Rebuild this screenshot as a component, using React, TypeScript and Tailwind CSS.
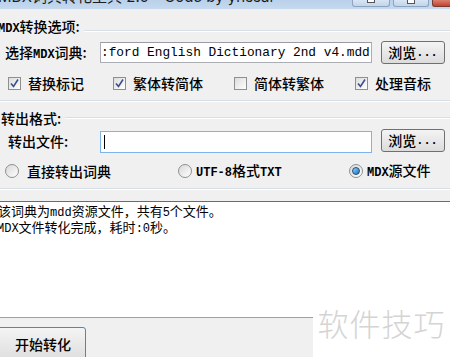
import React from "react";

const Latin = ({ children }: { children: React.ReactNode }) => (
  <span className="text-[12px] font-['Liberation_Mono',monospace] font-bold">{children}</span>
);

const CheckBox = ({ checked }: { checked: boolean }) => (
  <div className="w-[13px] h-[13px] border border-[#8e8f8f] bg-gradient-to-br from-[#dcdcdc] to-[#ffffff] flex items-center justify-center shrink-0">
    {checked && (
      <svg width="11" height="11" viewBox="0 0 11 11">
        <path d="M2 5.5 L4.5 8.5 L9 1.5" stroke="#3c4f8c" strokeWidth="1.6" fill="none" />
      </svg>
    )}
  </div>
);

const Radio = ({ checked }: { checked: boolean }) => (
  <div className="w-[14px] h-[14px] rounded-full border border-[#8e8f8f] bg-gradient-to-br from-[#d8d8d8] to-[#ffffff] flex items-center justify-center shrink-0">
    {checked && (
      <div className="w-[8px] h-[8px] rounded-full bg-gradient-to-br from-[#8fd3ff] to-[#1d6fb5] border border-[#1f4f7c]" />
    )}
  </div>
);

const Browse = () => (
  <div className="w-[64px] h-[23px] border border-[#707070] rounded-[3px] bg-gradient-to-b from-[#f4f4f4] to-[#dcdcdc] flex items-center justify-center text-[14px] font-medium text-black">
    浏览<Latin>...</Latin>
  </div>
);

const Sep = () => (
  <div className="h-[2px] flex flex-col">
    <div className="h-[1px] bg-[#d5dfe5]" />
    <div className="h-[1px] bg-white" />
  </div>
);

export default function App() {
  return (
    <div className="w-[450px] h-[357px] bg-[#f0f0f0] overflow-hidden relative flex flex-col font-['Noto_Sans_CJK_SC',sans-serif] text-black">
      {/* title bar */}
      <div className="h-[9px] shrink-0 bg-gradient-to-b from-[#b9d1ea] to-[#c6d9ee] flex overflow-hidden relative">
        <div className="ml-[-2px] -mt-[13px] text-[15px] leading-[20px] text-[#1e1e1e] whitespace-nowrap font-['Inter','Noto_Sans_CJK_SC',sans-serif]">
          MDX词典转化工具 2.0 - Code by ynssar
        </div>
        <div className="ml-auto flex gap-[3px] items-start">
          <div className="w-[38px] h-[7px] rounded-b-[3px] border border-t-0 border-[#8ea3bd] bg-gradient-to-b from-[#d8e5f3] to-[#c2d5ea] flex justify-center">
            <div className="w-[8px] h-[3px] bg-white border border-[#555] border-t-0" />
          </div>
          <div className="w-[36px] h-[7px] rounded-b-[3px] border border-t-0 border-[#8ea3bd] bg-gradient-to-b from-[#d8e5f3] to-[#c2d5ea] flex justify-center">
            <div className="w-[8px] h-[4px] bg-white border border-[#555] border-t-0" />
          </div>
          <div className="w-[18px] h-[7px] rounded-bl-[3px] border border-t-0 border-r-0 border-[#7b3a31] bg-gradient-to-b from-[#d8806f] to-[#c4402c]" />
        </div>
      </div>

      {/* group 1 header */}
      <div className="mt-[10px] h-[16px] flex items-center shrink-0">
        <div className="ml-[-2px] text-[14px] leading-[16px] whitespace-nowrap font-medium">
          <Latin>MDX</Latin>转换选项:
        </div>
        <div className="flex-1 ml-[4px] mt-[7px]"><Sep /></div>
      </div>

      {/* row 1 */}
      <div className="mt-[6px] h-[23px] flex items-center shrink-0">
        <div className="ml-[5px] w-[95px] text-[14px] whitespace-nowrap font-medium">
          选择<Latin>MDX</Latin>词典:
        </div>
        <div className="w-[272px] h-[21px] bg-white border border-[#abadb3] border-t-[#9a9ca3] overflow-hidden flex items-center">
          <span className="text-[12.8px] font-['Liberation_Mono',monospace] whitespace-nowrap">
            :ford English Dictionary 2nd v4.mdd
          </span>
        </div>
        <div className="ml-[9px]"><Browse /></div>
      </div>

      {/* checkbox row */}
      <div className="mt-[12px] h-[14px] flex items-center shrink-0 text-[14px] whitespace-nowrap font-medium">
        <div className="ml-[8px] w-[105px] flex items-center gap-[7px]"><CheckBox checked />替换标记</div>
        <div className="w-[121px] flex items-center gap-[7px]"><CheckBox checked />繁体转简体</div>
        <div className="w-[121px] flex items-center gap-[7px]"><CheckBox checked={false} />简体转繁体</div>
        <div className="flex items-center gap-[7px]"><CheckBox checked />处理音标</div>
      </div>

      <div className="mt-[10px] shrink-0"><Sep /></div>

      {/* group 2 header */}
      <div className="mt-[8px] h-[16px] flex items-center shrink-0">
        <div className="ml-[1px] text-[14px] leading-[16px] whitespace-nowrap font-medium">转出格式:</div>
        <div className="flex-1 ml-[4px]"><Sep /></div>
      </div>

      {/* row 2 */}
      <div className="mt-[3px] h-[24px] flex items-center shrink-0">
        <div className="ml-[8px] w-[92px] text-[14px] whitespace-nowrap font-medium">转出文件:</div>
        <div className="w-[272px] h-[22px] mt-[2px] bg-white border border-[#7eb4ea] flex items-center">
          <div className="ml-[3px] w-[1px] h-[14px] bg-black" />
        </div>
        <div className="ml-[9px] -mt-[1px]"><Browse /></div>
      </div>

      {/* radio row */}
      <div className="mt-[11px] h-[14px] flex items-center shrink-0 text-[14px] whitespace-nowrap font-medium">
        <div className="ml-[5px] w-[173px] flex items-center gap-[8px]"><Radio checked={false} />直接转出词典</div>
        <div className="w-[171px] flex items-center gap-[4px]"><Radio checked={false} /><span><Latin>UTF-8</Latin>格式<Latin>TXT</Latin></span></div>
        <div className="flex items-center gap-[4px]"><Radio checked /><span><Latin>MDX</Latin>源文件</span></div>
      </div>

      <div className="mt-[10px] shrink-0"><Sep /></div>

      {/* output text area */}
      <div className="mt-[11px] h-[116px] shrink-0 bg-white border-t border-[#6b6b6b] pt-[2px] text-[13px] leading-[14px] whitespace-nowrap">
        <div className="ml-[-2px]">该词典为<span className="font-['Liberation_Mono',monospace] text-[12px]">mdd</span>资源文件，共有<span className="font-['Liberation_Mono',monospace] text-[12px]">5</span>个文件。</div>
        <div className="ml-[-3px]"><span className="font-['Liberation_Mono',monospace] text-[12px]">MDX</span>文件转化完成，耗时<span className="font-['Liberation_Mono',monospace] text-[12px]">:0</span>秒。</div>
      </div>

      {/* bottom */}
      <div className="flex-1 border-t border-[#a0a0a0] bg-[#f0f0f0]">
        <div className="mt-[9px] ml-[-4px] w-[90px] h-[34px] rounded-[3px] border border-[#3c8ccb] bg-gradient-to-b from-[#f4f4f4] to-[#dedede] flex items-start justify-center pt-[6px] text-[14px] font-medium">
          <span className="ml-[4px]">开始转化</span>
        </div>
      </div>

      {/* watermark */}
      <div className="absolute left-[313px] top-[300px] w-[137px] h-[57px] bg-white flex items-start justify-center pt-[3px]">
        <span className="text-[31px] leading-[40px] text-[#d4d4d4] font-['Noto_Sans_CJK_SC',sans-serif] font-light tracking-[1px]">软件技巧</span>
      </div>
    </div>
  );
}
